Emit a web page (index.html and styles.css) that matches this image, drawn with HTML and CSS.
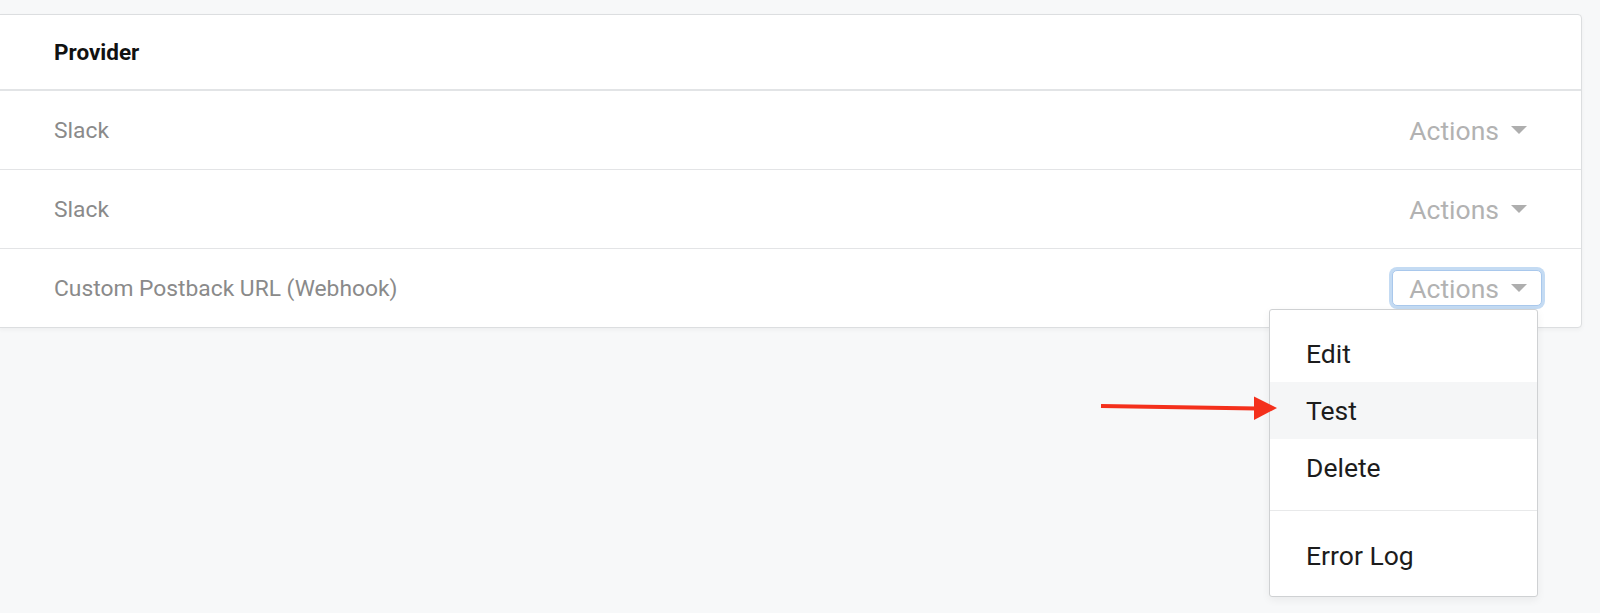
FILE: index.html
```html
<!DOCTYPE html>
<html lang="en">
<head>
<meta charset="UTF-8" />
<meta name="viewport" content="width=device-width, initial-scale=1" />
<title>Integrations</title>
<link rel="stylesheet" href="styles.css">
</head>
<body>
  <div class="card">
    <div class="table-head">Provider</div>

    <div class="row">
      <span class="provider">Slack</span>
      <div class="dropdown">
        <button class="btn-actions">Actions <span class="caret"></span></button>
      </div>
    </div>

    <div class="row">
      <span class="provider">Slack</span>
      <div class="dropdown">
        <button class="btn-actions">Actions <span class="caret"></span></button>
      </div>
    </div>

    <div class="row">
      <span class="provider">Custom Postback URL (Webhook)</span>
      <div class="dropdown open">
        <button class="btn-actions focus">Actions <span class="caret"></span></button>
        <ul class="menu">
          <li><a href="#">Edit</a></li>
          <li class="hover"><a href="#">Test</a></li>
          <li><a href="#">Delete</a></li>
          <li class="divider"></li>
          <li><a href="#">Error Log</a></li>
        </ul>
      </div>
    </div>
  </div>

  <!-- annotation arrow -->
  <svg class="arrow" width="180" height="28" viewBox="0 0 180 28">
    <line x1="2" y1="11" x2="158" y2="13.5" stroke="#f4301c" stroke-width="4" />
    <polygon points="155,1.5 178,13 155,25" fill="#f4301c" />
  </svg>
</body>
</html>
```

FILE: styles.css
```css
html, body { height: 100%; }
body { margin: 0; background: #f7f8f9; font-family: Roboto, "Liberation Sans", sans-serif; padding-top: 14px; box-sizing: border-box; }
.card { position: relative; margin: 0 18px 0 -1px; background: #fff; border: 1px solid #dcdee0; border-radius: 0 4px 4px 0; box-shadow: 0 2px 4px rgba(0,0,0,0.04); }
.table-head { height: 74px; display: flex; align-items: center; padding-left: 54px; font-size: 22.5px; font-weight: 700; color: #111; border-bottom: 2px solid #e2e4e6; }
.row { min-height: 78px; display: flex; align-items: center; justify-content: space-between; padding: 0 39px 0 54px; border-bottom: 1px solid #e3e4e6; }
.row:last-child { border-bottom: none; }
.provider { font-size: 22.8px; color: #8a8a8a; }

.dropdown { position: relative; }
.dropdown.open { z-index: 10; }
.btn-actions { display: flex; align-items: center; height: 36px; padding: 0 14px 0 16px; background: #fff; border: 1px solid transparent; border-radius: 5px; font-family: inherit; font-size: 26.5px; color: #b2b2b2; cursor: pointer; }
.btn-actions .caret { width: 0; height: 0; margin-left: 12px; border-left: 8px solid transparent; border-right: 8px solid transparent; border-top: 8px solid #aeaeae; }
.btn-actions.focus { border-color: #a9c8ec; box-shadow: 0 0 0 3px #c4dbf3; }

.menu { position: absolute; z-index: 20; top: 39px; right: 4px; width: 267px; margin: 0; padding: 15px 0 12px; list-style: none; background: #fff; border: 1px solid #cfd1d3; border-radius: 3px; box-shadow: 0 3px 8px rgba(0,0,0,0.06); }
.menu li { display: block; }
.menu li a { display: block; height: 57px; line-height: 57px; padding-left: 36px; font-size: 26.5px; color: #1c1c1c; text-decoration: none; }
.menu li.hover a { background: #f5f6f7; }
.menu .divider { height: 1px; margin: 14px 0 16px; background: #e8e9ea; }

.arrow { position: absolute; z-index: 30; left: 1099px; top: 395px; }
```
